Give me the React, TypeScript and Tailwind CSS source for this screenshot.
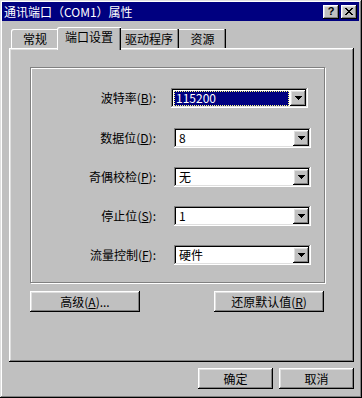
import React from "react";

const raised =
  "shadow-[inset_-1px_-1px_#000,inset_1px_1px_#fff,inset_-2px_-2px_#808080,inset_2px_2px_#dfdfdf]";
const sunken =
  "shadow-[inset_-1px_-1px_#fff,inset_1px_1px_#808080,inset_-2px_-2px_#dfdfdf,inset_2px_2px_#000]";
const panelShadow =
  "shadow-[inset_-1px_-1px_#000,inset_1px_1px_#fff,inset_-2px_-2px_#808080,inset_2px_2px_#dfdfdf]";

function Arrow() {
  return (
    <svg width="7" height="4" viewBox="0 0 7 4" className="block">
      <path d="M0 0h7v1H0zM1 1h5v1H1zM2 2h3v1H2zM3 3h1v1H3z" fill="#000" />
    </svg>
  );
}

function Combo({ value, selected, shift }: { value: string; selected?: boolean; shift?: boolean }) {
  return (
    <div className={`w-[137px] h-[20px] bg-white ${sunken} flex items-center p-[2px] ${shift ? "-ml-[3px]" : ""}`}>
      <div className="flex-1 h-full flex items-center pl-[1px] pr-[1px]">
        {selected ? (
          <div className="w-full h-[15px] bg-[#000080] text-white outline outline-1 outline-dotted outline-[#ffff80] -outline-offset-1 flex items-center pl-[2px] leading-none">
            {value}
          </div>
        ) : (
          <div className="pl-[2px] leading-none">{value}</div>
        )}
      </div>
      <div className={`w-[16px] h-[16px] bg-[#c0c0c0] ${raised} flex items-center justify-center`}>
        <Arrow />
      </div>
    </div>
  );
}

function Btn({ children, w, cls = "" }: { children: React.ReactNode; w: string; cls?: string }) {
  return (
    <div className={`${w} h-[21px] bg-[#c0c0c0] ${raised} flex items-center justify-center leading-none ${cls}`}>
      {children}
    </div>
  );
}

const rows: { label: string; key: string; value: string; selected?: boolean }[] = [
  { label: "波特率", key: "B", value: "115200", selected: true },
  { label: "数据位", key: "D", value: "8" },
  { label: "奇偶校检", key: "P", value: "无" },
  { label: "停止位", key: "S", value: "1" },
  { label: "流量控制", key: "F", value: "硬件" },
];

export default function App() {
  return (
    <div
      className={`w-[362px] h-[398px] bg-[#c0c0c0] pt-[2px] pl-[2px] pr-[3px] flex flex-col text-[12px] text-black font-['Noto_Sans_CJK_SC','Liberation_Sans',sans-serif] shadow-[inset_-1px_-1px_#000,inset_1px_1px_#dfdfdf,inset_-2px_-2px_#808080,inset_2px_2px_#fff] overflow-hidden`}
    >
      {/* Title bar */}
      <div className="h-[19px] bg-[#000080] flex items-center pl-[2px] pr-[2px]">
        <div className="text-white leading-none flex-1 whitespace-nowrap">通讯端口（COM1）属性</div>
        <div className={`w-[16px] h-[14px] bg-[#c0c0c0] ${raised} flex items-center justify-center text-[11px] font-bold leading-none font-['Liberation_Sans',sans-serif]`}>
          ?
        </div>
        <div className={`w-[16px] h-[14px] ml-[2px] bg-[#c0c0c0] ${raised} flex items-center justify-center`}>
          <svg width="8" height="7" viewBox="0 0 8 7">
            <path d="M0 0h2v1h1v1h2V1h1V0h2v1H7v1H6v1H5v1h1v1h1v1h1v1H6V6H5V5H3v1H2v1H0V6h1V5h1V4h1V3H2V2H1V1H0z" fill="#000" />
          </svg>
        </div>
      </div>

      {/* Tabs */}
      <div className="mt-[6px] h-[21px] ml-[9px] flex items-end">
        <div className="w-[48px] h-[19px] flex items-center justify-center shadow-[inset_1px_1px_#fff,inset_-1px_0_#000,inset_-2px_0_#808080] rounded-tl-[2px] leading-none">
          常规
        </div>
        <div className="relative z-10 -mx-[2px] mb-[-2px] w-[64px] h-[23px] bg-[#c0c0c0] flex items-start pt-[4px] justify-center shadow-[inset_1px_1px_#fff,inset_-1px_0_#000,inset_-2px_0_#808080] rounded-tl-[2px] leading-none">
          端口设置
        </div>
        <div className="w-[60px] h-[19px] flex items-center justify-center shadow-[inset_-1px_0_#000,inset_-2px_0_#808080,inset_0_1px_#fff] leading-none">
          驱动程序
        </div>
        <div className="w-[47px] h-[19px] flex items-center justify-center shadow-[inset_-1px_0_#000,inset_-2px_0_#808080,inset_0_1px_#fff] leading-none">
          资源
        </div>
      </div>

      {/* Panel */}
      <div className={`ml-[7px] w-[345px] h-[314px] ${panelShadow} flex flex-col`}>
        <div className="ml-[21px] mt-[19px] w-[295px] h-[216px] border border-[#808080] shadow-[inset_1px_1px_#fff,1px_1px_#fff] flex flex-col pt-[20px] gap-[19px]">
          {rows.map((r, i) => (
            <div key={r.key} className={`flex items-center h-[20px] ${i === 0 ? "mb-[1px]" : ""}`}>
              <div className="w-[125px] text-right leading-none whitespace-nowrap">
                {r.label}(<u>{r.key}</u>):
              </div>
              <div className="ml-[18px]">
                <Combo value={r.value} selected={r.selected} shift={i === 0} />
              </div>
            </div>
          ))}
        </div>
        <div className="ml-[21px] mt-[8px] w-[296px] flex justify-between">
          <Btn w="w-[110px]">
            高级(<u>A</u>)...
          </Btn>
          <Btn w="w-[110px]" cls="mr-[2px]">
            还原默认值(<u>R</u>)
          </Btn>
        </div>
      </div>

      {/* Bottom buttons */}
      <div className="ml-[7px] w-[345px] mt-[6px] flex justify-end gap-[6px]">
        <Btn w="w-[75px]">确定</Btn>
        <Btn w="w-[75px]">取消</Btn>
      </div>
    </div>
  );
}
